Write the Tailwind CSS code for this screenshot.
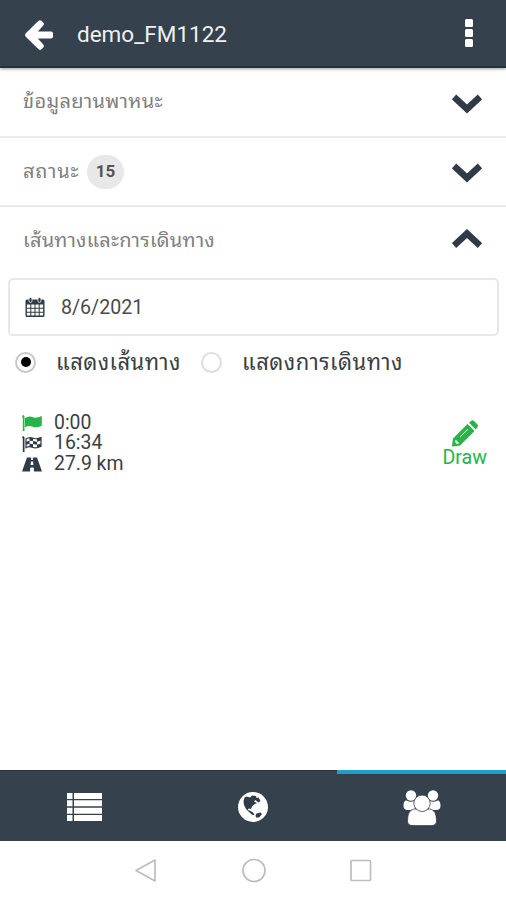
<!DOCTYPE html>
<html lang="th">
<head>
    <meta charset="UTF-8">
    <meta name="viewport" content="width=device-width, initial-scale=1.0">
    <title>demo_FM1122</title>
    <script src="https://cdn.jsdelivr.net/npm/@tailwindcss/browser@4"></script>
</head>
<body class="bg-white font-[Roboto,'Noto_Sans_Thai_Looped',Loma,Waree,Garuda,'Noto_Sans',sans-serif] text-[#3a3f44]">
    <div class="w-[506px] h-[900px] flex flex-col overflow-hidden">
        <!-- Header -->
        <header class="h-[68px] shrink-0 bg-[#35414c] border-b-2 border-[#26313e] shadow-[0_1px_3px_rgba(0,0,0,0.4)] flex items-center pl-[25px] pr-[33px]">
            <svg class="w-7 h-[30px] mt-[3px] shrink-0" viewBox="0 0 28 30" fill="#fff">
                <path d="M.8 13.300L13.500 .8Q15 -.5 16.500 .8L18.300 2.600Q19.500 4 18.300 5.500L12.800 11.500H26Q28 11.500 28 13.500V16.500Q28 18.500 26 18.500H12.800L18.300 24.500Q19.500 26 18.300 27.400L16.500 29.200Q15 30.500 13.500 29.200L.8 16.700Q-.6 15 .8 13.300Z"></path>
            </svg>
            <h1 class="ml-6 text-[22.5px] leading-7 text-[#eef1f3] flex-1 mt-px"><span class="inline-block whitespace-nowrap">demo_FM1122</span></h1>
            <svg class="w-2 h-7" viewBox="0 0 8 28" fill="#fff">
                <rect width="8" height="8" rx="1.500"></rect>
                <rect y="10" width="8" height="8" rx="1.500"></rect>
                <rect y="20" width="8" height="8" rx="1.500"></rect>
            </svg>
        </header>

        <!-- Accordion -->
        <main class="flex-1 text-[#808080]">
            <div class="h-[70px] border-b-2 border-[#ebebeb] flex items-center justify-between pl-[23px] pr-6">
                <span class="text-[20px] tracking-[0.3px] pb-[3px]">ข้อมูลยานพาหนะ</span>
                <svg class="w-[30px] h-5 mt-[3px]" viewBox="0 0 30 20" fill="none" stroke="#2f3b47" stroke-width="6.500"><path d="M2 3L15 15L28 3"></path></svg>
            </div>
            <div class="h-[69px] border-b-2 border-[#ebebeb] flex items-center justify-between pl-[23px] pr-6">
                <div class="flex items-center">
                    <span class="text-[20px] tracking-[0.8px] w-16 pb-[2px]">สถานะ</span>
                    <span class="w-[37px] h-[34px] rounded-full bg-[#e8e8e8] text-[#555] text-[17px] font-bold flex items-center justify-center">15</span>
                </div>
                <svg class="w-[30px] h-5 mt-[3px]" viewBox="0 0 30 20" fill="none" stroke="#2f3b47" stroke-width="6.500"><path d="M2 3L15 15L28 3"></path></svg>
            </div>
            <div class="h-[65px] flex items-center justify-between pl-[23px] pr-6">
                <span class="text-[20px] tracking-[0.22px]">เส้นทางและการเดินทาง</span>
                <svg class="w-[30px] h-5 mb-1" viewBox="0 0 30 20" fill="none" stroke="#2f3b47" stroke-width="6.500"><path d="M2 17.500L15 5.500L28 17.500"></path></svg>
            </div>

            <!-- Date -->
            <div class="mx-2 mt-[6px] w-[491px] h-[58px] border-2 border-[#e8e8e8] rounded-[5px] flex items-center pl-[15px] text-[#4a4a4a] text-[19.6px]">
                <svg class="w-[20px] h-[20px] shrink-0" viewBox="0 0 19 20">
                    <path fill="#2f3b47" fill-rule="evenodd" d="M1.500 2.500H17.500Q19 2.500 19 4V18.500Q19 20 17.500 20H1.500Q0 20 0 18.500V4Q0 2.500 1.500 2.500ZM1.400 7.500V10.700H4.800V7.500ZM5.800 7.500V10.700H9V7.500ZM10 7.500V10.700H13.200V7.500ZM14.200 7.500V10.700H17.600V7.500ZM1.400 11.700V14.700H4.800V11.700ZM5.800 11.700V14.700H9V11.700ZM10 11.700V14.700H13.200V11.700ZM14.200 11.700V14.700H17.600V11.700ZM1.400 15.700V18.600H4.800V15.700ZM5.800 15.700V18.600H9V15.700ZM10 15.700V18.600H13.200V15.700ZM14.200 15.700V18.600H17.600V15.700Z"></path>
                    <rect x="3.500" y=".5" width="3" height="5" rx="1.500" fill="#2f3b47" stroke="#fff" stroke-width=".7"></rect>
                    <rect x="12.500" y=".5" width="3" height="5" rx="1.500" fill="#2f3b47" stroke="#fff" stroke-width=".7"></rect>
                </svg>
                <span class="ml-4 pt-px">8/6/2021</span>
            </div>

            <!-- View mode -->
            <div class="h-[52px] flex items-center pl-[15px] text-[#3a3f44] text-[22px] whitespace-nowrap">
                <span class="w-[21px] h-[21px] shrink-0 rounded-full border-2 border-[#c8c8c8] flex items-center justify-center"><span class="w-[10px] h-[10px] rounded-full bg-black"></span></span>
                <span class="ml-[20px] w-[145px] tracking-[0.45px]">แสดงเส้นทาง</span>
                <span class="w-[21px] h-[21px] shrink-0 rounded-full border-2 border-[#dedede]"></span>
                <span class="ml-[20px] tracking-[0.48px]">แสดงการเดินทาง</span>
            </div>

            <!-- Trip summary -->
            <div class="mt-[25px] flex justify-between pl-[22px] pr-[19px]">
                <div class="text-[19.4px] leading-[20.4px] text-[#3a3f44]">
                    <div class="flex items-center gap-3">
                        <svg class="w-5 h-4" viewBox="0 0 20 16"><path fill="#26b446" d="M1 0Q2.500 0 2.500 1.500V16H.8V2.800Q-.4 1.500 1 0ZM3 3Q7 .5 10.500 2Q14 3.700 19.800 1V10.800Q14 13.500 10.500 11.500Q7 10 3 12.300Z"></path></svg>
                        <span>0:00</span>
                    </div>
                    <div class="flex items-center gap-3">
                        <svg class="w-5 h-4" viewBox="0 0 20 16">
                            <path fill="#2f3b47" d="M1 0Q2.500 0 2.500 1.500V16H.8V2.800Q-.4 1.500 1 0Z"></path>
                            <path fill="#fff" stroke="#2f3b47" stroke-width="1.200" d="M4 3Q7 .8 10.500 2Q14 3.700 19 1.600V10.300Q14 13 10.500 11.300Q7 9.800 4 11.700Z"></path>
                            <path fill="#2f3b47" d="M7.500 1.700L11 2V5L7.500 4.700ZM4 5.700L7.500 4.700V7.700L4 8.700ZM11 5L15 5.700V8.700L11 8ZM15 2.800L19 1.600V4.500L15 5.700ZM7.500 7.700L11 8V11.400L7.500 10.500ZM15 8.700L19 7.500V10.300L15 11.800Z"></path>
                        </svg>
                        <span>16:34</span>
                    </div>
                    <div class="flex items-center gap-3">
                        <svg class="w-5 h-[15px]" viewBox="0 0 20 15"><path fill="#2f3b47" fill-rule="evenodd" d="M5 .5H9.200L9 3H11L10.800 .5H15L20 14.500H12L11.700 10.500H8.300L8 14.500H0ZM8.900 4.500L8.600 8H11.400L11.100 4.500Z"></path></svg>
                        <span>27.9 km</span>
                    </div>
                </div>
                <div class="mt-[7px] flex flex-col items-center text-[#26b446]">
                    <svg class="w-[26px] h-[27px]" viewBox="0 0 26 27">
                        <path fill="#26b446" fill-rule="evenodd" d="M1 18.500L15.500 4L22.500 11L8 25.500L1 26.500Q0 26.500 0 25.500ZM3 21V22.500H4.500V24H6L7 23L4 20ZM8 16.500L15.500 9L16 9.500L8.500 17Z"></path>
                        <path fill="#26b446" d="M17 2.800L19 1Q20.500 -.4 22 1L25.300 4.200Q26.600 5.500 25.300 7.200L23.800 9.500Z"></path>
                    </svg>
                    <span class="text-[19.600px] leading-[22px]">Draw</span>
                </div>
            </div>
        </main>

        <!-- Tab bar -->
        <nav class="h-[71px] shrink-0 bg-[#35414c] grid grid-cols-3">
            <div class="border-t border-[#26313e] flex items-center justify-center">
                <svg class="w-[35px] h-7 ml-px mt-px" viewBox="0 0 35 28" fill="#fff">
                    <path d="M0 0H5.500V6H0ZM7 0H35V6H7ZM0 7.300H5.500V13.300H0ZM7 7.300H35V13.300H7ZM0 14.700H5.500V20.700H0ZM7 14.700H35V20.700H7ZM0 22H5.500V28H0ZM7 22H35V28H7Z"></path>
                </svg>
            </div>
            <div class="border-t border-[#26313e] flex items-center justify-center">
                <svg class="w-[30px] h-[30px] mt-px ml-px" viewBox="0 0 30 30">
                    <circle cx="15" cy="15" r="15" fill="#fff"></circle>
                    <path fill="#2f3b47" d="M6.500 5.500L9 4.500L12 5.500L14 3.500L18 4L18.500 6L20.500 5.500L22.500 9L20.500 10.500L18.500 9L17.500 8L16 9.500L19 11L16 12.500L14 14.500L13 17L10.500 16.500L10 18L12.500 19L15 20.500L16.500 23L14.500 23L11 20L8 17L6 13L5.500 9ZM18.500 21.500L22.500 20.500L24 22L21 25.500L18 25.500L17.500 23.500Z"></path>
                </svg>
            </div>
            <div class="border-t-4 border-[#1e9fcb] flex items-center justify-center">
                <svg class="w-[38px] h-[36px]" viewBox="0 0 38 36" fill="#fff">
                    <circle cx="8" cy="5.500" r="5.200"></circle>
                    <circle cx="30" cy="5.500" r="5.200"></circle>
                    <path d="M3.500 10.500Q8 13 12 10.500V20H5Q0 20 .5 15Q1 10 3.500 10.500ZM34.500 10.500Q30 13 26 10.500V20H33Q38 20 37.500 15Q37 10 34.500 10.500Z"></path>
                    <path stroke="#35414c" stroke-width=".8" d="M11 19H27Q33.500 20 33.500 31Q33.500 35.600 28 35.600H10Q4.500 35.600 4.500 31Q4.500 20 11 19Z"></path>
                    <circle cx="19" cy="13.300" r="8.200" stroke="#35414c" stroke-width=".8"></circle>
                </svg>
            </div>
        </nav>

        <!-- Android navigation -->
        <footer class="h-[59px] shrink-0 bg-white flex justify-center">
            <svg class="w-[238px] h-[59px] -ml-px" viewBox="0 0 238 59" fill="none" stroke="#bdbdbd" stroke-width="1.700" stroke-linejoin="round">
                <path d="M2 29.500L21 19V40Z"></path>
                <circle cx="120" cy="29.500" r="11"></circle>
                <rect x="217" y="19.500" width="19.500" height="20" rx="1"></rect>
            </svg>
        </footer>
    </div>
</body>
</html>
